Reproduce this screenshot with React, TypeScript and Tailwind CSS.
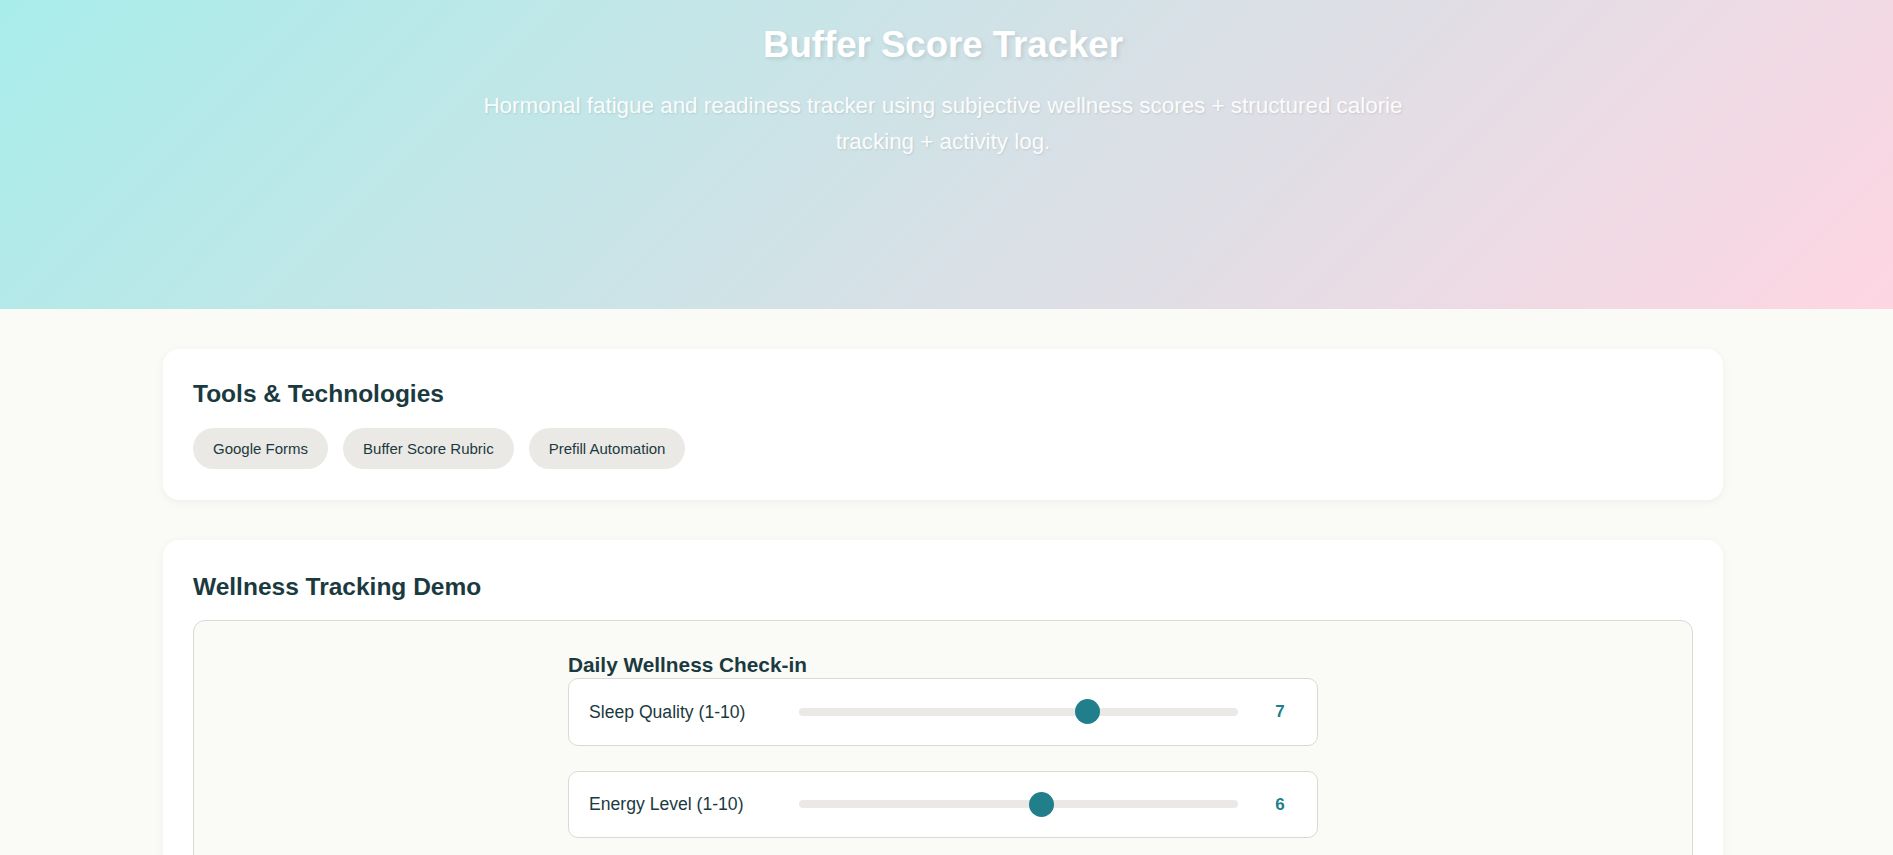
import { useState } from "react";

const tools = ["Google Forms", "Buffer Score Rubric", "Prefill Automation"];

const metrics = [
    { key: "sleep", label: "Sleep Quality (1-10)", initial: 7 },
    { key: "energy", label: "Energy Level (1-10)", initial: 6 },
    { key: "mood", label: "Mood (1-10)", initial: 7 },
    { key: "stress", label: "Stress Level (1-10)", initial: 4 },
];

const MetricRow = ({ label, initial }: { label: string; initial: number }) => {
    const [value, setValue] = useState(initial);

    return (
        <div className="flex items-center rounded-[10px] border border-[#dcd9d4] bg-white p-5">
            <span className="w-[190px] text-[17.6px] leading-[1.3]">{label}</span>
            <input
                type="range"
                min={1}
                max={10}
                value={value}
                onChange={(e) => setValue(Number(e.target.value))}
                className="m-0 ml-5 h-2 flex-1 cursor-pointer appearance-none rounded-full bg-[#ebe9e6] outline-none [&::-webkit-slider-thumb]:h-[25px] [&::-webkit-slider-thumb]:w-[25px] [&::-webkit-slider-thumb]:appearance-none [&::-webkit-slider-thumb]:rounded-full [&::-webkit-slider-thumb]:bg-[#217f8b]"
            />
            <span className="ml-[25px] w-[34px] text-center text-[17px] font-bold text-[#217f8b]">
                {value}
            </span>
        </div>
    );
};

export default function App() {
    return (
        <div className="min-h-screen bg-[#fafbf7] font-['Liberation_Sans',Arial,sans-serif] text-[#1b3a40]">
            {/* Hero */}
            <header className="h-[309px] bg-[linear-gradient(135deg,#a8edea_0%,#fed6e3_100%)] pt-[23px] pr-[7px] text-center text-white">
                <h1 className="text-[36.6px] leading-[1.2] font-bold [text-shadow:2px_2px_4px_rgba(0,0,0,0.1)]">
                    Buffer Score Tracker
                </h1>
                <p className="mx-auto mt-[21px] max-w-[960px] text-[22.4px] leading-[1.6] opacity-90 [text-shadow:1px_1px_2px_rgba(0,0,0,0.1)]">
                    Hormonal fatigue and readiness tracker using subjective wellness scores + structured calorie
                    tracking + activity log.
                </p>
            </header>

            <div className="pr-[7px]">
                <main className="mx-auto flex max-w-[1560px] flex-col gap-10 py-10">
                    {/* Tools */}
                    <section className="rounded-2xl bg-white p-[30px] pb-[31px] shadow-[0_2px_10px_rgba(0,0,0,0.05)]">
                        <h2 className="mb-[18px] text-[24.5px] leading-[1.25] font-bold">Tools &amp; Technologies</h2>
                        <div className="flex flex-wrap gap-[15px]">
                            {tools.map((tool) => (
                                <span
                                    key={tool}
                                    className="rounded-full bg-[#ebe9e6] px-5 py-[10px] text-[15px] leading-[21px]"
                                >
                                    {tool}
                                </span>
                            ))}
                        </div>
                    </section>

                    {/* Demo */}
                    <section className="rounded-2xl bg-white p-[30px] shadow-[0_2px_10px_rgba(0,0,0,0.05)]">
                        <h2 className="mt-[2px] mb-[18px] text-[24.5px] leading-[1.25] font-bold">
                            Wellness Tracking Demo
                        </h2>
                        <div className="rounded-xl border border-[#dcd9d4] bg-[#fafaf7] p-[30px]">
                            <div className="mx-auto max-w-[750px]">
                                <h3 className="mt-[2px] text-[20.8px] leading-[1.2] font-bold">
                                    Daily Wellness Check-in
                                </h3>
                                <div className="flex flex-col gap-[25px]">
                                    {metrics.map((m) => (
                                        <MetricRow key={m.key} label={m.label} initial={m.initial} />
                                    ))}
                                </div>
                            </div>
                        </div>
                    </section>
                </main>
            </div>
        </div>
    );
}
